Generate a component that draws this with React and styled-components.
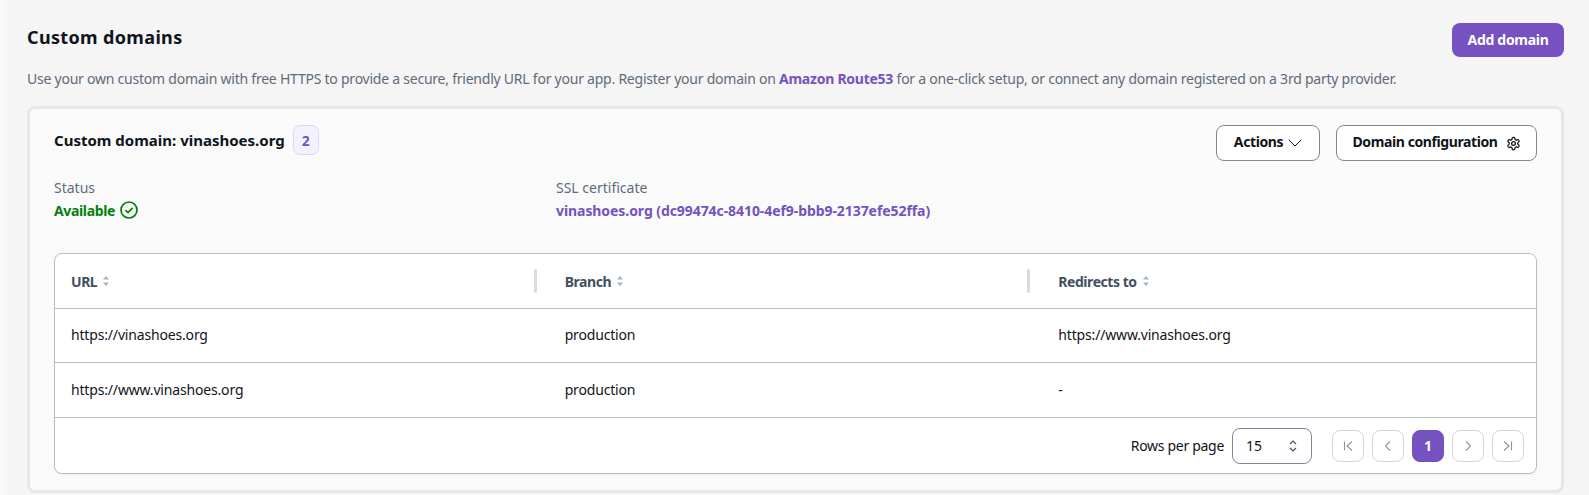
import React from 'react';
import styled, { createGlobalStyle } from 'styled-components';

const Global = createGlobalStyle`
  html, body { margin: 0; padding: 0; background: #f5f5f5; }
  body { font-family: "Noto Sans", "Open Sans", Arial, sans-serif; font-size: 14px; color: #0f141a; }
  * { box-sizing: border-box; }
`;

const Page = styled.div`
  width: 1589px; height: 495px; overflow: hidden;
  padding: 23px 25px 0 27px;
  background: linear-gradient(90deg, #fafafa 0, #f5f5f5 9px);
`;
const HeadRow = styled.div`
  display: flex; justify-content: space-between; align-items: flex-start; height: 34px;
`;
const Title = styled.h1`
  margin: 0; font-size: 18px; line-height: 28px; font-weight: 700; color: #0f141a; letter-spacing: 0.35px;
`;
const Description = styled.p`
  margin: 12px 0 17px; font-size: 14px; line-height: 20px; color: #5f6b7a; white-space: nowrap; letter-spacing: -0.235px;
`;
const Link = styled.a`
  color: #7552c0; font-weight: 700; text-decoration: none; letter-spacing: ${p => p.$tight ? '-0.07px' : '-0.25px'};
`;
const PrimaryButton = styled.button`
  width: 112px; height: 34px; border: 0; border-radius: 8px; background: #7552c0; color: #fff;
  font: 700 14px "Noto Sans", sans-serif; padding: 0 0 1px; letter-spacing: -0.3px;
`;
const Card = styled.section`
  height: 387px; border: 3px solid #e4e7ec; border-radius: 8px; background: #fafafa;
  padding: 16px 24px 0 24px;
`;
const CardHead = styled.div`
  display: flex; justify-content: space-between; align-items: flex-start; height: 52px;
`;
const CardTitleWrap = styled.div`
  display: flex; align-items: center; gap: 8px; height: 30px;
`;
const CardTitle = styled.h2`
  margin: 0; font-size: 15px; line-height: 20px; font-weight: 700; color: #0f141a;
`;
const Badge = styled.span`
  width: 26px; height: 30px; display: flex; align-items: center; justify-content: center;
  background: #f4f1ff; border: 1px solid #ddd6f8; border-radius: 7px; color: #7552c0;
  font-weight: 700; font-size: 14px;
`;
const Actions = styled.div`
  display: flex; gap: 16px;
`;
const OutlineButton = styled.button`
  display: flex; align-items: center; justify-content: center; gap: ${p => p.$gap}px;
  width: ${p => p.$w}px; height: 36px; background: #fff; border: 1px solid #7d8998; border-radius: 8px;
  font: 700 14px "Noto Sans", sans-serif; color: #0f141a; padding: 0 0 3px; letter-spacing: -0.4px;
  & > svg { margin-top: 3px; }
`;
const Meta = styled.div`
  display: grid; grid-template-columns: 502px 1fr; margin-top: 1px; height: 75px;
`;
const Label = styled.div`
  font-size: 14px; line-height: 20px; color: #5f6b7a;
`;
const Value = styled.div`
  display: flex; align-items: center; gap: 5px; margin-top: 2px; height: 20px; font-weight: 700; font-size: 14px;
`;
const Status = styled.span`
  color: #037f0c; letter-spacing: -0.35px;
`;
const TableBox = styled.div`
  height: 221px; background: #fff; border: 1px solid #b8bec8; border-radius: 8px; overflow: hidden;
  box-shadow: 0 1px 2px rgba(0,0,0,0.05);
`;
const Row = styled.div`
  display: grid; grid-template-columns: repeat(3, 1fr); align-items: center;
  height: ${p => p.$h}px; border-bottom: 1px solid #b8bec8;
`;
const HeadCell = styled.div`
  position: relative; display: flex; align-items: center; gap: 5px; height: 100%; padding-left: 16px;
  font-weight: 700; font-size: 14px; color: #424f60; letter-spacing: -0.45px;
`;
const Divider = styled.span`
  position: absolute; right: 12px; top: 15px; width: 3px; height: 24px; border-radius: 2px; background: #d9dbde;
`;
const Cell = styled.div`
  padding: 0 0 2px 16px; font-size: 14px; color: #0f141a; letter-spacing: -0.17px;
`;
const Footer = styled.div`
  display: flex; justify-content: flex-end; align-items: center; height: 55px; padding-right: 12px;
`;
const RowsLabel = styled.span`
  font-size: 14px; color: #0f141a; margin-right: 8px; letter-spacing: -0.3px;
`;
const SelectBox = styled.div`
  display: flex; align-items: center; justify-content: space-between; width: 80px; height: 36px;
  padding: 0 14px 0 13px; background: #fff; border: 1px solid #7d8998; border-radius: 8px; font-size: 14px;
  margin-right: 20px;
`;
const Pager = styled.div`
  display: flex; gap: 8px;
`;
const PageButton = styled.button`
  width: 32px; height: 32px; padding: 0; display: flex; align-items: center; justify-content: center;
  border-radius: 8px; border: 1px solid ${p => p.$active ? '#7552c0' : '#d1d5db'};
  background: ${p => p.$active ? '#7552c0' : '#fff'}; color: ${p => p.$active ? '#fff' : '#8c95a1'};
  font: 700 14px "Noto Sans", sans-serif;
`;

const Sort = () => (
  <svg width="8" height="12" viewBox="0 0 8 12" fill="#a9b0ba"><path d="M4 1 7 4.5H1z" /><path d="M4 11 1 7.5h6z" /></svg>
);
const Check = () => (
  <svg width="18" height="18" viewBox="0 0 18 18" fill="none" stroke="#037f0c" strokeWidth="1.7"><circle cx="9" cy="9" r="8" /><path d="M5.5 9.2 8 11.6l4.6-4.8" /></svg>
);
const Caret = () => (
  <svg width="14" height="8" viewBox="0 0 14 8" fill="none" stroke="#0f141a" strokeWidth="1"><path d="M.7.8 7 7l6.3-6.2" /></svg>
);
const Gear = () => (
  <svg width="15" height="15" viewBox="0 0 24 24" fill="none" stroke="#0f141a" strokeWidth="2" strokeLinejoin="round"><path d="M12.2 2h-.4a2 2 0 0 0-2 2v.2a2 2 0 0 1-1 1.7l-.4.3a2 2 0 0 1-2 0l-.2-.1a2 2 0 0 0-2.7.7l-.2.4a2 2 0 0 0 .7 2.7l.2.1a2 2 0 0 1 1 1.7v.5a2 2 0 0 1-1 1.8l-.2.1a2 2 0 0 0-.7 2.7l.2.4a2 2 0 0 0 2.7.7l.2-.1a2 2 0 0 1 2 0l.4.3a2 2 0 0 1 1 1.7v.2a2 2 0 0 0 2 2h.4a2 2 0 0 0 2-2v-.2a2 2 0 0 1 1-1.7l.4-.3a2 2 0 0 1 2 0l.2.1a2 2 0 0 0 2.7-.7l.2-.4a2 2 0 0 0-.7-2.7l-.2-.1a2 2 0 0 1-1-1.8v-.5a2 2 0 0 1 1-1.7l.2-.1a2 2 0 0 0 .7-2.7l-.2-.4a2 2 0 0 0-2.7-.7l-.2.1a2 2 0 0 1-2 0l-.4-.3a2 2 0 0 1-1-1.7V4a2 2 0 0 0-2-2z" /><circle cx="12" cy="12" r="3" /></svg>
);
const UpDown = () => (
  <svg width="8" height="12" viewBox="0 0 8 12" fill="none" stroke="#424f60" strokeWidth="1.2"><path d="M1 4 4 1l3 3M1 8l3 3 3-3" /></svg>
);
const Nav = ({ d }) => (
  <svg width="12" height="12" viewBox="0 0 12 12" fill="none" stroke="#8c95a1" strokeWidth="1.1"><path d={d} /></svg>
);

const rows = [
  ['https://vinashoes.org', 'production', 'https://www.vinashoes.org', 54],
  ['https://www.vinashoes.org', 'production', '-', 55],
];

export default function App() {
  return (
    <Page>
      <Global />
      <HeadRow>
        <Title>Custom domains</Title>
        <PrimaryButton>Add domain</PrimaryButton>
      </HeadRow>
      <Description>
        Use your own custom domain with free HTTPS to provide a secure, friendly URL for your app. Register your domain on <Link>Amazon Route53</Link> for a one-click setup, or connect any domain registered on a 3rd party provider.
      </Description>
      <Card>
        <CardHead>
          <CardTitleWrap>
            <CardTitle>Custom domain: vinashoes.org</CardTitle>
            <Badge>2</Badge>
          </CardTitleWrap>
          <Actions>
            <OutlineButton $w={104} $gap={5}>Actions <Caret /></OutlineButton>
            <OutlineButton $w={201} $gap={8}>Domain configuration <Gear /></OutlineButton>
          </Actions>
        </CardHead>
        <Meta>
          <div>
            <Label>Status</Label>
            <Value><Status>Available</Status><Check /></Value>
          </div>
          <div>
            <Label>SSL certificate</Label>
            <Value><Link $tight>vinashoes.org (dc99474c-8410-4ef9-bbb9-2137efe52ffa)</Link></Value>
          </div>
        </Meta>
        <TableBox>
          <Row $h={55}>
            <HeadCell>URL <Sort /><Divider /></HeadCell>
            <HeadCell>Branch <Sort /><Divider /></HeadCell>
            <HeadCell>Redirects to <Sort /></HeadCell>
          </Row>
          {rows.map(r => (
            <Row key={r[0]} $h={r[3]}>
              <Cell>{r[0]}</Cell>
              <Cell>{r[1]}</Cell>
              <Cell>{r[2]}</Cell>
            </Row>
          ))}
          <Footer>
            <RowsLabel>Rows per page</RowsLabel>
            <SelectBox>15 <UpDown /></SelectBox>
            <Pager>
              <PageButton><Nav d="M2.5 1.5v9M10 1.5 5 6l5 4.5" /></PageButton>
              <PageButton><Nav d="M8 1.5 3.5 6 8 10.5" /></PageButton>
              <PageButton $active>1</PageButton>
              <PageButton><Nav d="M4 1.5 8.5 6 4 10.5" /></PageButton>
              <PageButton><Nav d="M9.5 1.5v9M2 1.5 7 6l-5 4.5" /></PageButton>
            </Pager>
          </Footer>
        </TableBox>
      </Card>
    </Page>
  );
}
